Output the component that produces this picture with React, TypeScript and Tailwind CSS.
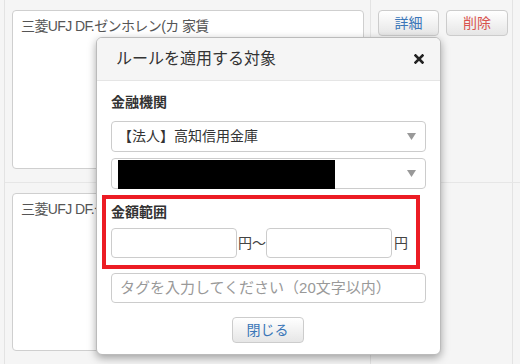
import React from 'react';

const font = { fontFamily: '"Liberation Sans", "Noto Sans CJK JP", sans-serif' };

const Arrow = () => (
  <svg width="9" height="7" viewBox="0 0 9 7" className="shrink-0">
    <path d="M0 0 H9 L4.5 7 Z" fill="#999" />
  </svg>
);

const Row: React.FC<{ text: string; showButtons?: boolean; last?: boolean }> = ({ text, showButtons, last }) => (
  <div className={`flex ${last ? 'h-[181px]' : 'h-[183px] border-b border-[#e6e6e6]'}`}>
    <div className="w-[366px] border-r border-[#e3e3e3] pl-[7px] pr-[6px] pt-[10px] pb-[13px]">
      <div className="h-full bg-white border border-[#cfcfcf] rounded-[4px] pl-[8px] pr-[9px] py-[5px] text-[14px] text-[#555] leading-[20px] tracking-[-0.6px]">
        {text}
      </div>
    </div>
    <div className="w-[142px] border-r border-[#e3e3e3] flex items-start gap-[7px] pl-[7px] pt-[10px]">
      {showButtons && (
        <>
          <button className="w-[61px] h-[26px] rounded-[4px] border border-[#ccc] bg-gradient-to-b from-white to-[#e6e6e6] text-[14px] text-[#3a76b8]">詳細</button>
          <button className="w-[62px] h-[26px] rounded-[4px] border border-[#ccc] bg-gradient-to-b from-white to-[#e6e6e6] text-[14px] text-[#d9534f]">削除</button>
        </>
      )}
    </div>
  </div>
);

export default function App() {
  return (
    <div className="relative w-[520px] h-[364px] overflow-hidden bg-[#f5f5f5]" style={font}>
      <div className="pl-[4px]">
        <div className="border-l border-[#e3e3e3]">
          <Row text="三菱UFJ DF.ゼンホレン(カ 家賃" showButtons />
          <Row text="三菱UFJ DF.ゼンホレン(カ 家賃" last />
        </div>
      </div>

      <div className="absolute left-[96px] top-[37px] w-[345px] h-[318px] bg-white border border-[#bbb] rounded-[6px] shadow-[0_3px_9px_rgba(0,0,0,0.35)] flex flex-col overflow-hidden">
        <div className="h-[43px] shrink-0 bg-[#f5f5f5] border-b border-[#e5e5e5] flex items-center justify-between pl-[19px] pr-[16px]">
          <span className="text-[16px] text-[#333]">ルールを適用する対象</span>
          <svg width="10" height="10" viewBox="0 0 10 10">
            <path d="M1.5 1.5 L8.5 8.5 M8.5 1.5 L1.5 8.5" stroke="#222" strokeWidth="2.6" strokeLinecap="square" />
          </svg>
        </div>
        <div className="flex flex-col px-[14px] pt-[11px]">
          <div className="text-[14px] font-bold text-[#333] leading-[20px] h-[20px]">金融機関</div>
          <div className="mt-[9px] h-[31px] border border-[#ccc] rounded-[4px] flex items-center justify-between pl-[6px] pr-[9px] text-[14px] text-[#333]">
            <span>【法人】高知信用金庫</span>
            <Arrow />
          </div>
          <div className="mt-[6px] h-[31px] border border-[#ccc] rounded-[4px] flex items-center justify-between pl-[6px] pr-[9px]">
            <div className="w-[217px] h-[29px] mt-[1px] bg-black" />
            <Arrow />
          </div>
          <div className="mt-[6px] -ml-[9px] w-[318px] h-[74px] border-[4px] border-[#ec1c24] pl-[5px] pt-[3px]">
            <div className="text-[14px] font-bold text-[#333] leading-[20px]">金額範囲</div>
            <div className="mt-[6px] flex items-center text-[14px] text-[#444]">
              <div className="w-[126px] h-[30px] border border-[#ccc] rounded-[4px] bg-white" />
              <span className="ml-[1px]">円〜</span>
              <div className="w-[126px] h-[30px] border border-[#ccc] rounded-[4px] bg-white" />
              <span className="ml-[2px]">円</span>
            </div>
          </div>
          <div className="mt-[4px] h-[30px] border border-[#ccc] rounded-[4px] flex items-center pl-[8px] text-[15px] text-[#999]">
            タグを入力してください（20文字以内）
          </div>
          <div className="mt-[14px] flex justify-center">
            <button className="w-[72px] h-[26px] rounded-[4px] border border-[#ccc] bg-gradient-to-b from-white to-[#e6e6e6] text-[14px] text-[#3a76b8] -ml-[2px]">閉じる</button>
          </div>
        </div>
      </div>
    </div>
  );
}
